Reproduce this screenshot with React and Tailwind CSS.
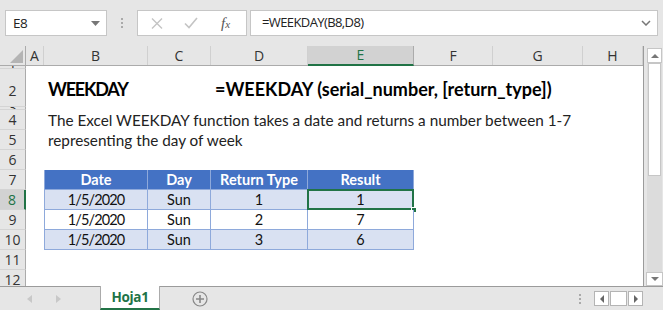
import React from "react";

const COLS = "grid grid-cols-[26px_18px_104px_63px_97px_106px_79px_90px_60px] leading-none";
const CELL_FONT = { fontFamily: "Lato, 'Liberation Sans', sans-serif" };
const UI_FONT = { fontFamily: "'Open Sans', 'Noto Sans', sans-serif" };

const letters = ["A", "B", "C", "D", "E", "F", "G", "H"];

const tableRows = [
  { n: 8, cells: ["1/5/2020", "Sun", "1", "1"], bg: "bg-[#d9e1f2]" },
  { n: 9, cells: ["1/5/2020", "Sun", "2", "7"], bg: "bg-white" },
  { n: 10, cells: ["1/5/2020", "Sun", "3", "6"], bg: "bg-[#d9e1f2]" },
];

function RowHead({ n, h, active }) {
  // 行番号セル
  return (
    <div
      className={`${h} flex items-center justify-center overflow-hidden border-b border-[#d4d4d4] text-[14px] leading-none ${
        active
          ? "bg-[#d2d2d2] text-[#217346] border-r-2 border-r-[#217346]"
          : "bg-[#e6e6e6] text-[#333] border-r border-r-[#ababab]"
      }`}
      style={UI_FONT}
    >
      {n}
    </div>
  );
}

function Toolbar() {
  return (
    <div className="h-[46px] shrink-0 flex items-center pl-[5px] bg-[#e6e6e6]" style={UI_FONT}>
      {/* name box */}
      <div className="w-[102px] h-[26px] bg-white border border-[#c6c6c6] flex items-center justify-between pl-[7px] pr-[6px]">
        <span className="text-[13.5px] tracking-[-0.4px] text-[#222]">E8</span>
        <svg width="9" height="5" viewBox="0 0 9 5">
          <path d="M0 0h9L4.5 5z" fill="#777" />
        </svg>
      </div>
      <div className="w-[30px] flex flex-col items-center gap-[2px]">
        <span className="w-[2px] h-[2px] bg-[#aaa]" />
        <span className="w-[2px] h-[2px] bg-[#aaa]" />
        <span className="w-[2px] h-[2px] bg-[#aaa]" />
      </div>
      {/* cancel / enter / fx */}
      <div className="w-[110px] h-[26px] bg-white border border-[#c6c6c6] flex items-center">
        <svg className="ml-[13px]" width="12" height="11" viewBox="0 0 12 11">
          <path d="M1 0.5l10 10M11 0.5l-10 10" stroke="#c4c4c4" strokeWidth="1.4" />
        </svg>
        <svg className="ml-[21px]" width="14" height="12" viewBox="0 0 14 12">
          <path d="M1 6.5l4 4L13 1" stroke="#c4c4c4" strokeWidth="1.6" fill="none" />
        </svg>
        <span
          className="ml-[23px] text-[15px] italic text-[#555] leading-none"
          style={{ fontFamily: "'Liberation Serif', serif" }}
        >
          f<span className="text-[11px]">x</span>
        </span>
      </div>
      <div className="ml-[3px] w-[408px] h-[26px] bg-white border border-[#c6c6c6] flex items-center justify-between pl-[11px] pr-[6px]">
        <span className="text-[13px] tracking-[-0.6px] text-[#222]">=WEEKDAY(B8,D8)</span>
        <svg width="10" height="6" viewBox="0 0 10 6">
          <path d="M1 1l4 4 4-4" stroke="#777" strokeWidth="1.5" fill="none" />
        </svg>
      </div>
    </div>
  );
}

function ColumnHeader() {
  return (
    <div className={`${COLS} h-[20px] shrink-0 border-b border-[#ababab] bg-[#e6e6e6]`} style={UI_FONT}>
      <div className="relative border-r border-[#ababab]">
        <svg className="absolute right-[2px] bottom-[2px]" width="13" height="13" viewBox="0 0 13 13">
          <path d="M13 0V13H0z" fill="#b4b4b4" />
        </svg>
      </div>
      {letters.map((l) =>
        l === "E" ? (
          <div
            key={l}
            className="bg-[#d2d2d2] text-[#217346] border-b-2 border-[#217346] border-r border-r-[#ababab] flex items-center justify-center text-[14px] -mb-[1px]"
          >
            {l}
          </div>
        ) : (
          <div key={l} className="border-r border-[#d0d0d0] flex items-center justify-center text-[14px] text-[#333]">
            {l}
          </div>
        )
      )}
    </div>
  );
}

function Sheet() {
  return (
    <div className="w-[644px] flex flex-col bg-white border-r border-[#9b9b9b] overflow-hidden" style={CELL_FONT}>
      <ColumnHeader />
      {/* row 1 */}
      <div className={`${COLS} h-[3px] shrink-0`}>
        <RowHead n={1} h="h-[3px]" />
      </div>
      {/* row 2 */}
      <div className={`${COLS} h-[38px] shrink-0`}>
        <RowHead n={2} h="h-[38px] pt-[6px]" />
        <div />
        <div className="pl-[4px] pt-[1px] flex items-center text-[18px] tracking-[-1.2px] font-bold text-black whitespace-nowrap">
          WEEKDAY
        </div>
        <div />
        <div className="pl-[4px] pt-[1px] flex items-center text-[18px] font-bold text-black whitespace-nowrap">
          =WEEKDAY (serial_number, [return_type])
        </div>
      </div>
      {/* row 3 */}
      <div className={`${COLS} h-[3px] shrink-0`}>
        <RowHead n={3} h="h-[3px]" />
      </div>
      {/* rows 4,5 */}
      <div className={`${COLS} h-[20px] shrink-0`}>
        <RowHead n={4} h="h-[20px]" />
        <div />
        <div className="pl-[4px] pt-[2px] flex items-center text-[15.3px] text-[#222] whitespace-nowrap">
          The Excel WEEKDAY function takes a date and returns a number between 1-7
        </div>
      </div>
      <div className={`${COLS} h-[20px] shrink-0`}>
        <RowHead n={5} h="h-[20px]" />
        <div />
        <div className="pl-[4px] pt-[2px] flex items-center text-[15.3px] text-[#222] whitespace-nowrap">
          representing the day of week
        </div>
      </div>
      <div className={`${COLS} h-[20px] shrink-0`}>
        <RowHead n={6} h="h-[20px]" />
      </div>
      {/* table header */}
      <div className={`${COLS} h-[20px] shrink-0`}>
        <RowHead n={7} h="h-[20px]" />
        <div />
        {["Date", "Day", "Return Type", "Result"].map((t, i) => (
          <div
            key={t}
            className={`bg-[#4472c4] text-white font-bold text-[14.5px] pt-[2px] flex items-center justify-center border-b border-r border-[#8ea9db] ${
              i === 0 ? "border-l" : ""
            }`}
          >
            {t}
          </div>
        ))}
      </div>
      {tableRows.map((r) => (
        <div key={r.n} className={`${COLS} h-[20px] shrink-0`}>
          <RowHead n={r.n} h="h-[20px]" active={r.n === 8} />
          <div />
          {r.cells.map((c, i) => (
            <div
              key={i}
              className={`${r.bg} relative text-[14.5px] text-[#111] pt-[2px] flex items-center justify-center border-b border-r border-[#8ea9db] ${
                i === 0 ? "border-l tracking-[-0.9px]" : ""
              }`}
            >
              {c}
              {r.n === 8 && i === 3 && (
                <>
                  <div className="absolute -left-[1px] -top-[1px] -right-[1px] -bottom-[1px] border-2 border-[#217346]" />
                  <div className="absolute -right-[4px] -bottom-[4px] w-[6px] h-[6px] bg-[#217346] border border-white" />
                </>
              )}
            </div>
          ))}
        </div>
      ))}
      <div className={`${COLS} h-[20px] shrink-0`}>
        <RowHead n={11} h="h-[20px]" />
      </div>
      <div className={`${COLS} h-[20px] shrink-0`}>
        <RowHead n={12} h="h-[20px]" />
      </div>
    </div>
  );
}

function VScroll() {
  return (
    <div className="w-[19px] pl-[3px] pr-[1px] flex flex-col bg-[#e6e6e6] pt-[2px]">
      <div className="h-[15px] bg-white border border-[#c6c6c6] flex items-center justify-center">
        <svg width="8" height="4" viewBox="0 0 8 4">
          <path d="M0 4h8L4 0z" fill="#777" />
        </svg>
      </div>
      <div className="flex-1 bg-[#dcdcdc] flex flex-col">
        <div className="h-[113px] mx-[1px] bg-white border border-[#c6c6c6]" />
        <div className="flex-1" />
        <div className="h-[14px] bg-white border border-[#c6c6c6] flex items-center justify-center -mx-[1px]">
          <svg width="8" height="4" viewBox="0 0 8 4">
            <path d="M0 0h8L4 4z" fill="#777" />
          </svg>
        </div>
      </div>
    </div>
  );
}

function TabBar() {
  return (
    <div className="h-[24px] shrink-0 flex bg-[#e6e6e6]" style={UI_FONT}>
      <div className="w-[100px] border-t border-[#9b9b9b] flex items-center">
        <svg className="ml-[27px]" width="5" height="8" viewBox="0 0 5 8">
          <path d="M5 0v8L0 4z" fill="#c8c8c8" />
        </svg>
        <svg className="ml-[24px]" width="5" height="8" viewBox="0 0 5 8">
          <path d="M0 0v8l5-4z" fill="#c8c8c8" />
        </svg>
      </div>
      <div className="w-[60px] bg-white border-x border-[#ababab] border-b-2 border-b-[#217346] flex items-center justify-center text-[13.5px] tracking-[-0.3px] font-bold text-[#217346]">
        Hoja1
      </div>
      <div className="flex-1 border-t border-[#9b9b9b] flex items-center">
        <svg className="ml-[32px]" width="16" height="16" viewBox="0 0 16 16">
          <circle cx="8" cy="8" r="7" stroke="#888" strokeWidth="1.2" fill="none" />
          <path d="M8 4v8M4 8h8" stroke="#888" strokeWidth="1.6" />
        </svg>
        <div className="flex-1" />
        <div className="flex flex-col gap-[2px] mr-[13px]">
          <span className="w-[2px] h-[2px] bg-[#aaa]" />
          <span className="w-[2px] h-[2px] bg-[#aaa]" />
          <span className="w-[2px] h-[2px] bg-[#aaa]" />
        </div>
        <div className="flex items-center gap-[1px] mr-[20px]">
          <div className="w-[15px] h-[15px] bg-white border border-[#b4b4b4] flex items-center justify-center">
            <svg width="4" height="8" viewBox="0 0 4 8">
              <path d="M4 0v8L0 4z" fill="#666" />
            </svg>
          </div>
          <div className="w-[17px] h-[15px] bg-white border border-[#b4b4b4]" />
          <div className="w-[15px] h-[15px] bg-white border border-[#b4b4b4] flex items-center justify-center">
            <svg width="4" height="8" viewBox="0 0 4 8">
              <path d="M0 0v8l4-4z" fill="#666" />
            </svg>
          </div>
        </div>
      </div>
    </div>
  );
}

export default function App() {
  return (
    <div className="w-[663px] h-[310px] overflow-hidden bg-[#e6e6e6] flex flex-col">
      <Toolbar />
      <div className="h-[240px] shrink-0 flex">
        <Sheet />
        <VScroll />
      </div>
      <TabBar />
    </div>
  );
}
